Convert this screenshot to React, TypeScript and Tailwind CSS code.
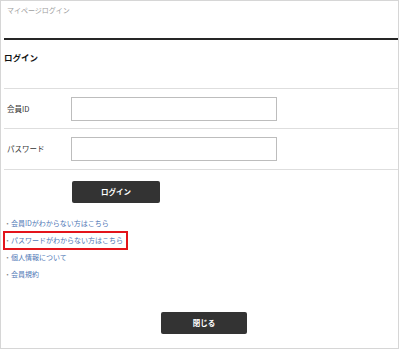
import React from 'react';

const links = [
  '会員IDがわからない方はこちら',
  'パスワードがわからない方はこちら',
  '個人情報について',
  '会員規約',
];

const Field: React.FC<{ label: string; type?: string; rowClass: string }> = ({ label, type = 'text', rowClass }) => (
  <div className={`flex items-center border-b border-[#dedede] ${rowClass}`}>
    <label className="w-[67px] pl-[3px] text-[7.5px] text-[#333]">{label}</label>
    <input
      type={type}
      className="w-[206px] h-[24px] border border-[#bdbdbd] bg-white outline-none"
    />
  </div>
);

export default function App() {
  return (
    <div
      className="w-[399px] h-[349px] border border-[#d6d6d6] bg-white pl-[3px] overflow-hidden"
      style={{ fontFamily: '"Noto Sans CJK JP", "Noto Sans", sans-serif' }}
    >
      {/* header */}
      <div className="h-[39px] border-b-2 border-[#262626] pt-[4px] pl-[3px] text-[7px] leading-[10px] text-[#a0a0a0]">
        マイページログイン
      </div>

      {/* title */}
      <div className="h-[49px] border-b border-[#dedede] pt-[11px] text-[8.5px] leading-[12px] font-bold text-[#111]">
        ログイン
      </div>

      <Field label="会員ID" rowClass="h-[40px]" />
      <Field label="パスワード" type="password" rowClass="h-[41px]" />

      <button className="mt-[11px] ml-[68px] w-[88px] h-[22px] rounded-[2px] bg-[#333333] text-white text-[7.5px] font-bold">
        ログイン
      </button>

      {/* links */}
      <ul className="mt-[12px]">
        {links.map((text, i) => (
          <li key={text} className="relative h-[17px] flex items-center text-[7px] text-[#4f78b6]">
            <span className="w-[7px] text-center text-[#888]">・</span>
            <span>{text}</span>
            {i === 1 && (
              <span className="absolute left-[-1px] top-[-1px] w-[125px] h-[19px] border-2 border-[#e3141b]" />
            )}
          </li>
        ))}
      </ul>

      <button className="mt-[29px] ml-[157px] w-[86px] h-[22px] rounded-[2px] bg-[#333333] text-white text-[7.5px] font-bold">
        閉じる
      </button>
    </div>
  );
}
